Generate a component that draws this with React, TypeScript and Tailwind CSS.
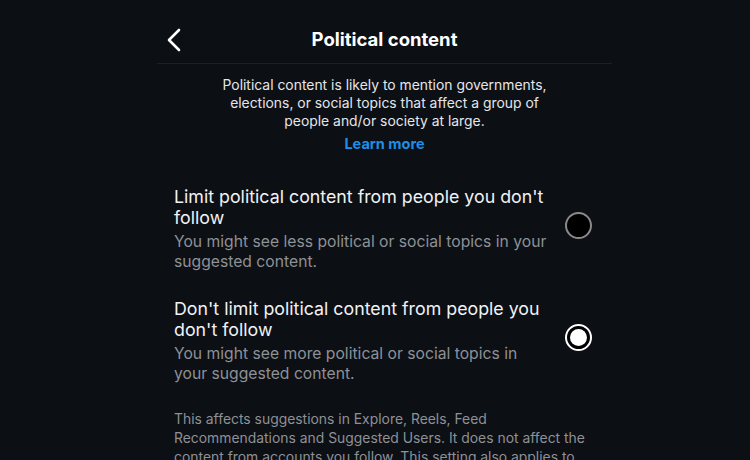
import React from "react";

export default function App() {
  return (
    <div
      className="w-[750px] h-[460px] overflow-hidden bg-[#0c0f14] text-white"
      style={{ fontFamily: "Inter, 'Liberation Sans', sans-serif" }}
    >
      <div className="ml-[157px] w-[455px]">
        <div className="relative h-[64px] pt-[16px] border-b border-[#1c1f25] flex items-center justify-center">
          <svg
            className="absolute left-[9px] top-[28px]"
            width="16"
            height="24"
            viewBox="0 0 16 24"
            fill="none"
          >
            <path d="M13 2 L3 12 L13 22" stroke="white" strokeWidth="2.6" strokeLinecap="round" strokeLinejoin="round" />
          </svg>
          <div className="text-[18.5px] font-bold">Political content</div>
        </div>
        <div className="pt-[12px] text-center text-[13.9px] leading-[18px] text-[#e4e6ea]">
          Political content is likely to mention governments,
          <br />
          elections, or social topics that affect a group of
          <br />
          people and/or society at large.
        </div>
        <div className="mt-[3px] text-center text-[14.5px] font-bold text-[#1d8fe8]">Learn more</div>
        <div className="pl-[17px] pr-[20px] mt-[31px] flex flex-col gap-[26px]">
          <div className="flex items-center">
            <div className="flex-1">
              <div className="text-[17.8px] leading-[21px] text-[#f1f2f4] pr-[20px]">
                Limit political content from people you don't follow
              </div>
              <div className="mt-[4px] text-[15.7px] leading-[20px] text-[#8e9196] pr-[10px]">
                You might see less political or social topics in your suggested content.
              </div>
            </div>
            <div className="mb-[6px] w-[27px] h-[27px] rounded-full border-2 border-[#8a8a8a] bg-black shrink-0" />
          </div>
          <div className="flex items-center">
            <div className="flex-1">
              <div className="text-[17.8px] leading-[21px] text-[#f1f2f4] pr-[20px]">
                Don't limit political content from people you don't follow
              </div>
              <div className="mt-[4px] text-[15.7px] leading-[20px] text-[#8e9196] pr-[40px]">
                You might see more political or social topics in your suggested content.
              </div>
            </div>
            <div className="mb-[6px] w-[27px] h-[27px] rounded-full border-2 border-white bg-black shrink-0 flex items-center justify-center">
              <div className="w-[17px] h-[17px] rounded-full bg-white" />
            </div>
          </div>
        </div>
        <div className="pl-[17px] pr-[20px] mt-[26px] text-[13.9px] leading-[19px] text-[#8e9196]">
          This affects suggestions in Explore, Reels, Feed Recommendations and Suggested Users. It does not affect the content from accounts you follow. This setting also applies to
        </div>
      </div>
    </div>
  );
}
